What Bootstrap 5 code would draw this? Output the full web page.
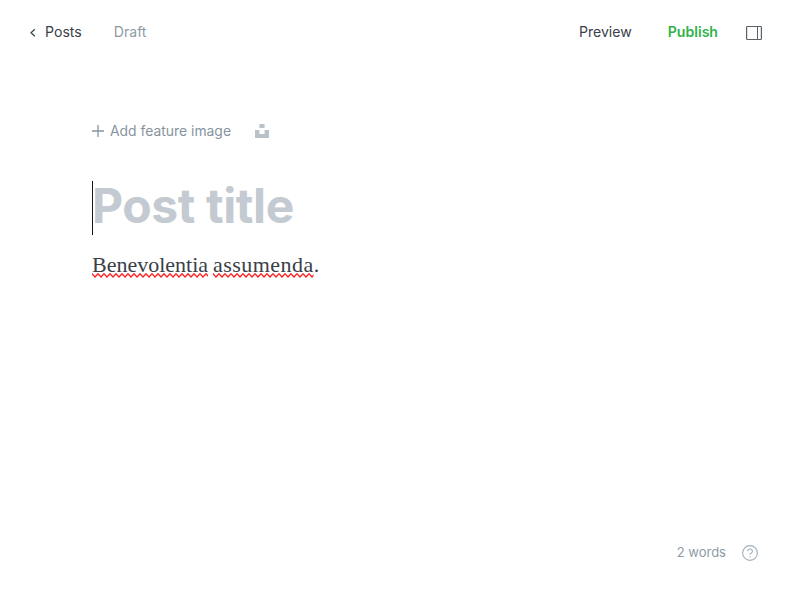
<!DOCTYPE html>
<html lang="en">
<head>
<meta charset="utf-8">
<meta name="viewport" content="width=device-width, initial-scale=1">
<title>Post editor</title>
<link href="https://cdn.jsdelivr.net/npm/bootstrap@5.3.0/dist/css/bootstrap.min.css" rel="stylesheet">
<style>
body { font-family: Inter, "Liberation Sans", sans-serif; color: #394047; font-size: 14.1px; line-height: 20px; background: #fff; }
a, a:hover { color: inherit; text-decoration: none; }
svg { display: block; flex: none; }
.topbar { height: 65px; padding: 0 38px 0 30px; }
.back { gap: 9px; }
.bar-text { padding-bottom: 2px; }
.status { margin-left: 32px; color: #8e9ba5; }
.publish { color: #30b24a !important; font-weight: 600; margin-left: 36px; }
.panel-toggle { margin-left: 28px; }
.editor { padding: 56px 92px 0; }
.feature { color: #8794a0; font-size: 13.9px; }
.feature-label { margin: 0 24px 0 6px; }
.post-title { font-size: 48px; line-height: 50px; font-weight: 700; color: #c3cad1; letter-spacing: -.4px; margin: 40px 0 0; border-left: 1px solid #15171a; height: 54px; white-space: nowrap; text-indent: -1px; }
.post-body { font-family: Georgia, "Liberation Serif", serif; font-size: 22px; line-height: 32px; color: #394047; margin: 14px 0 0; white-space: nowrap; word-spacing: -.5px; }
.misspelt { position: relative; display: inline-block; }
.misspelt.loose { letter-spacing: .45px; }
.misspelt svg { position: absolute; left: 0; top: 24px; width: 100%; height: 5px; }
.statusbar { padding: 0 42px 36px 0; color: #8e9ba5; font-size: 13px; gap: 16px; }
</style>
</head>
<body class="vh-100 d-flex flex-column overflow-hidden">
<header class="topbar d-flex align-items-center">
  <a href="#" class="back d-flex align-items-center">
    <svg width="6" height="9" viewBox="0 0 6 9" fill="none" stroke="#394047" stroke-width="1.2"><path d="M4.8 1.3 1 4.8l3.8 3.5"/></svg>
    <span class="bar-text">Posts</span>
  </a>
  <span class="status bar-text">Draft</span>
  <a href="#" class="ms-auto bar-text">Preview</a>
  <a href="#" class="publish bar-text">Publish</a>
  <a href="#" class="panel-toggle" aria-label="Settings">
    <svg width="16" height="16" viewBox="0 0 16 16" fill="none" stroke="#5b6168"><rect x=".6" y="1.5" width="14.8" height="13" rx=".8" stroke-width="1.2"/><path d="M11.5 1.5v13"/></svg>
  </a>
</header>
<main class="editor flex-grow-1">
  <div class="feature d-flex align-items-center">
    <svg width="12" height="12" viewBox="0 0 12 12" stroke="#8794a0" stroke-width="1.3"><path d="M6 0v12M0 6h12"/></svg>
    <span class="feature-label">Add feature image</span>
    <svg width="14" height="14" viewBox="0 0 14 14" fill="#b9c2c9"><path d="M4.4 0h5.2v4H4.4zM0 6h4.4v4h5.2V6H14v8H0z"/></svg>
  </div>
  <h1 class="post-title">Post title</h1>
  <p class="post-body"><span class="misspelt">Benevolentia<svg><defs><pattern id="wave" width="6" height="5" patternUnits="userSpaceOnUse"><path d="M-3 4 0 .8 3 4 6 .8 9 4" fill="none" stroke="#f22" stroke-width="1.4"/></pattern></defs><rect width="100%" height="5" fill="url(#wave)"/></svg></span> <span class="misspelt loose">assumenda<svg><rect width="100%" height="5" fill="url(#wave)"/></svg></span>.</p>
</main>
<footer class="statusbar d-flex align-items-center justify-content-end">
  <span class="bar-text">2 words</span>
  <svg width="16" height="16" viewBox="0 0 16 16" fill="none" stroke="#a3aeb8" stroke-width="1.1"><circle cx="8" cy="8" r="7.4"/><path d="M5.6 6.1a2.4 2.2 0 1 1 3.6 2c-.8.4-1.2.7-1.2 1.7M8 11.2v1.3"/></svg>
</footer>
<script src="https://cdn.jsdelivr.net/npm/bootstrap@5.3.0/dist/js/bootstrap.bundle.min.js"></script>
</body>
</html>
